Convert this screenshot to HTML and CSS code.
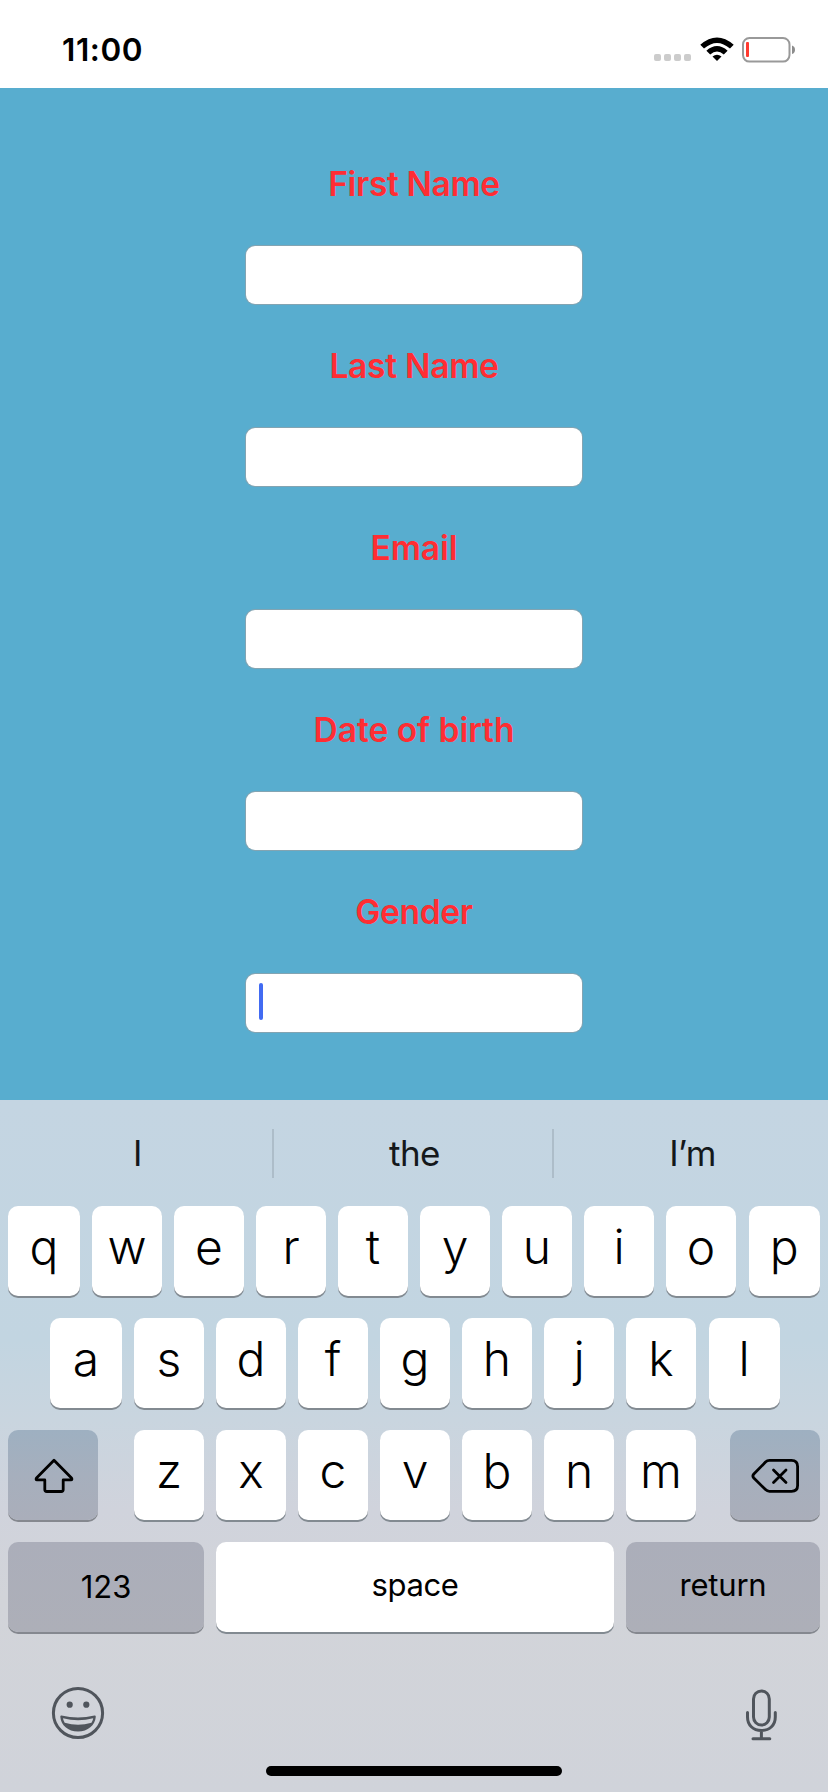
FILE: index.html
```html
<!DOCTYPE html>
<html lang="en">
<head>
<meta charset="utf-8">
<title>Sign up</title>
<link rel="stylesheet" href="styles.css">
</head>
<body>
<header class="status">
  <span class="time">11:00</span>
  <div class="indicators">
    <div class="signal"><i></i><i></i><i></i><i></i></div>
    <svg class="wifi" width="34" height="24" viewBox="0 0 34 24">
      <path d="M0.3 7.7 Q17 -6.8 33.7 7.7 L30 11.6 Q17 0.2 4 11.6 Z"/>
      <path d="M6.4 13.7 Q17 4.4 27.6 13.7 L23.8 17.5 Q17 11.4 10.2 17.5 Z"/>
      <path d="M12.5 19.6 Q17 15.8 21.5 19.6 L17 24 Z"/>
    </svg>
    <svg class="battery" width="54" height="26" viewBox="0 0 54 26">
      <rect x="1" y="1" width="46.500" height="23.600" rx="6.500" fill="none" stroke="#999" stroke-width="2"/>
      <rect x="4" y="5" width="3" height="15" rx="1" fill="#ff3b30"/>
      <path d="M50 8.500 Q53 9.500 53 12.700 Q53 16 50 17 Z" fill="#8c8c8c"/>
    </svg>
  </div>
</header>

<main class="form">
  <label class="label first">First Name</label><div class="input"></div>
  <label class="label last">Last Name</label><div class="input"></div>
  <label class="label email">Email</label><div class="input"></div>
  <label class="label birth">Date of birth</label><div class="input"></div>
  <label class="label gender">Gender</label><div class="input"><span class="caret"></span></div>
</main>

<section class="keyboard">
  <div class="suggestions">
    <span class="word">I</span><i class="rule"></i><span class="word">the</span><i class="rule"></i><span class="word">I’m</span>
  </div>
  <div class="row">
    <span class="key wide">q</span><span class="key">w</span><span class="key">e</span><span class="key">r</span><span class="key">t</span><span class="key">y</span><span class="key">u</span><span class="key">i</span><span class="key">o</span><span class="key end">p</span>
  </div>
  <div class="row inset">
    <span class="key wide">a</span><span class="key">s</span><span class="key">d</span><span class="key">f</span><span class="key">g</span><span class="key">h</span><span class="key">j</span><span class="key">k</span><span class="key end">l</span>
  </div>
  <div class="row">
    <span class="key special shift">
      <svg width="40" height="36" viewBox="0 0 40 36" fill="none" stroke="#000" stroke-width="2.800" stroke-linejoin="round">
        <path d="M20 2.200 L37.500 20 Q38.500 21.900 37 21.900 H29.200 V31.500 Q29.200 33.500 27.200 33.500 H12.800 Q10.800 33.500 10.800 31.500 V21.900 H3 Q1.500 21.900 2.500 20 Z"/>
      </svg>
    </span>
    <span class="key">z</span><span class="key">x</span><span class="key">c</span><span class="key">v</span><span class="key">b</span><span class="key">n</span><span class="key">m</span>
    <span class="key special delete">
      <svg width="48" height="36" viewBox="0 0 48 36" fill="none" stroke="#000" stroke-width="2.800" stroke-linejoin="round" stroke-linecap="round">
        <path d="M18.500 2.400 H40.500 Q46.600 2.400 46.600 8.500 V27.500 Q46.600 33.300 40.500 33.300 H18.500 Q16.200 33.300 14.500 31.600 L2.800 20 Q1 18 2.800 16 L14.500 4.100 Q16.200 2.400 18.500 2.400 Z"/>
        <path d="M22.500 12 L35 24.500 M35 12 L22.500 24.500"/>
      </svg>
    </span>
  </div>
  <div class="row">
    <span class="key special text numbers">123</span><span class="key text space">space</span><span class="key special text return">return</span>
  </div>
  <div class="tools">
    <svg width="54" height="54" viewBox="0 0 54 54">
      <circle cx="27" cy="27" r="24.600" fill="none" stroke="#50555c" stroke-width="3"/>
      <circle cx="18.700" cy="18.700" r="3.100" fill="#50555c"/>
      <circle cx="35.300" cy="18.700" r="3.100" fill="#50555c"/>
      <path fill="#50555c" fill-rule="evenodd" d="M10.500 29.500 Q9.400 29.200 9.300 30.800 C10 39.500 17 45.500 27 45.500 S44 39.500 44.800 30.800 Q44.700 29.200 43.500 29.500 Q27 33.600 10.500 29.500 Z M12 32.300 Q27 36 42.200 32.300 Q42 34.500 40.500 36.800 Q27 40.500 13.700 36.800 Q12.200 34.500 12 32.300 Z"/>
    </svg>
    <svg width="32" height="52" viewBox="0 0 32 52" fill="none" stroke="#50555c" stroke-width="3" stroke-linecap="round">
      <rect x="8.500" y="2" width="15.800" height="34" rx="7.900"/>
      <path d="M2.500 23.500 V28 C2.500 36 8 41.500 16.400 41.500 S30.300 36 30.300 28 V23.500 M16.400 42 V49 M8 49.800 H24.800"/>
    </svg>
  </div>
  <div class="home"></div>
</section>
</body>
</html>
```
FILE: styles.css
```css
* { box-sizing: border-box; }
body {
  margin: 0;
  width: 828px;
  height: 1792px;
  overflow: hidden;
  display: flex;
  flex-direction: column;
  background: #fff;
  color: #000;
  font-family: Inter, "Liberation Sans", sans-serif;
}
svg { display: block; }

.status {
  height: 88px;
  display: flex;
  justify-content: space-between;
  padding: 0 32px 0 62px;
}
.time {
  font-size: 31.5px;
  font-weight: 600;
  line-height: 99px;
  letter-spacing: 0.6px;
}
.indicators { display: flex; padding-top: 37px; }
.signal { display: flex; gap: 3px; padding: 17px 9px 0 0; }
.signal i { width: 7px; height: 7px; border-radius: 2px; background: #ccc; }
.battery { margin-left: 8px; }

.form {
  height: 1012px;
  padding-top: 71px;
  display: flex;
  flex-direction: column;
  align-items: center;
  background: #58adcf;
}
.label {
  height: 50px;
  line-height: 50px;
  margin-bottom: 37px;
  font-size: 33.5px;
  font-weight: 600;
  color: #ff2d33;
  white-space: nowrap;
}
.first, .gender { letter-spacing: -0.35px; }
.last { letter-spacing: -0.25px; }
.input {
  width: 336px;
  height: 58px;
  margin-bottom: 37px;
  padding: 9px 13px;
  border-radius: 9px;
  background: #fff;
  box-shadow: 0 0 0 1px rgba(150, 160, 165, 0.7);
}
.caret { display: block; width: 4px; height: 37px; border-radius: 2px; background: #426bf2; }

.keyboard {
  height: 692px;
  display: flex;
  flex-direction: column;
  background: linear-gradient(#c4d5e2 0, #c2d5e1 240px, #c9d5df 320px, #d0d3dc 410px, #d2d4d9 500px, #d0d3da 100%);
}
.suggestions {
  height: 106px;
  display: grid;
  grid-template-columns: 272px 2px 278px 2px 274px;
}
.word {
  text-align: center;
  font-size: 35px;
  line-height: 106px;
  letter-spacing: -0.6px;
  color: #14181b;
  padding-left: 3px;
}
.rule { height: 49px; margin-top: 29px; background: #adbdc9; }

.row {
  height: 90px;
  margin-bottom: 22px;
  padding-left: 8px;
  display: flex;
  gap: 12px;
}
.inset { padding-left: 50px; }
.key {
  width: 70px;
  height: 90px;
  border-radius: 10px;
  background: #fff;
  box-shadow: 0 2px 0 #828a91;
  text-align: center;
  font-size: 48px;
  font-weight: 350;
  line-height: 81px;
}
.wide { width: 72px; }
.end { width: 71px; margin-left: 0.6px; }
.special {
  background: linear-gradient(#abaeba, #adafb8);
  box-shadow: 0 2px 0 #85888f;
}
.shift, .delete {
  width: 90px;
  background: linear-gradient(#9eb0c1, #a6afbd 50%, #aaaeba);
}
.shift { margin-right: 24px; padding: 28px 0 0 26px; }
.delete { margin-left: 22px; padding: 28px 0 0 21px; }
.text { font-size: 31px; font-weight: 400; line-height: 85px; }
.numbers { width: 196px; line-height: 89px; }
.space { width: 398px; letter-spacing: -0.4px; }
.return { width: 194px; letter-spacing: -0.2px; }

.tools {
  height: 112px;
  display: flex;
  justify-content: space-between;
  padding: 32px 51px 0;
}
.tools svg:last-child { margin: 3px 0 0; }
.home {
  width: 296px;
  height: 10px;
  border-radius: 5px;
  margin: 0 auto;
  background: #000;
}
```
